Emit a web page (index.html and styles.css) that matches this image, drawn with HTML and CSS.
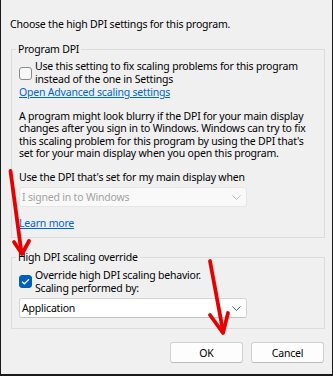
FILE: index.html
```html
<!DOCTYPE html>
<html>
<head>
<meta charset="utf-8">
<link rel="stylesheet" href="styles.css">
</head>
<body>
<div class="window">
  <p class="intro">Choose the high DPI settings for this program.</p>
  <fieldset class="group g1">
    <legend>Program DPI</legend>
    <div class="check-row">
      <span class="box"></span>
      <span class="label">Use this setting to fix scaling problems for this program<br>instead of the one in Settings</span>
    </div>
    <a class="link">Open Advanced scaling settings</a>
    <p class="para">A program might look blurry if the DPI for your main display<br>changes after you sign in to Windows. Windows can try to fix<br>this scaling problem for this program by using the DPI that's<br>set for your main display when you open this program.</p>
    <p class="label2">Use the DPI that's set for my main display when</p>
    <div class="select disabled">
      <span>I signed in to Windows</span>
      <svg class="chev" width="9" height="5" viewBox="0 0 9 5"><path d="M0.5 0.5 L4.5 4.5 L8.5 0.5" fill="none" stroke="#b8b8b8" stroke-width="1"/></svg>
    </div>
    <a class="link learn">Learn more</a>
  </fieldset>
  <fieldset class="group g2">
    <legend>High DPI scaling override</legend>
    <div class="check-row">
      <span class="box checked"><svg width="9" height="7" viewBox="0 0 9 7"><path d="M1 3.6 L3.3 5.8 L8 1.2" fill="none" stroke="#fff" stroke-width="1.2"/></svg></span>
      <span class="label">Override high DPI scaling behavior.<br>Scaling performed by:</span>
    </div>
    <div class="select">
      <span>Application</span>
      <svg class="chev" width="9" height="5" viewBox="0 0 9 5"><path d="M0.5 0.5 L4.5 4.5 L8.5 0.5" fill="none" stroke="#606060" stroke-width="1"/></svg>
    </div>
  </fieldset>
  <div class="buttons">
    <button class="btn">OK</button>
    <button class="btn">Cancel</button>
  </div>
  <svg class="arrows" width="333" height="376" viewBox="0 0 333 376">
    <g fill="none" stroke="#e60000" stroke-width="3.8" stroke-linecap="round" stroke-linejoin="round">
      <path d="M10.5 171 L21.5 253"/>
      <path d="M14 242 L22 254 L29 241"/>
      <path d="M210 261 L223 331"/>
      <path d="M210 315 L223 333 L228 313"/>
    </g>
  </svg>
</div>
</body>
</html>
```

FILE: styles.css
```css
html, body {
  margin: 0;
  padding: 0;
  background: #f0f0f0;
}

.window {
  position: relative;
  width: 333px;
  height: 376px;
  box-sizing: border-box;
  background: #f0f0f0;
  border-left: 1px solid #1a1a1a;
  border-right: 1px solid #1a1a1a;
  border-bottom: 2px solid #1a1a1a;
  font-family: "Noto Sans", "DejaVu Sans", sans-serif;
  font-size: 10.5px;
  letter-spacing: -0.2px;
  line-height: 13px;
  color: #000;
  white-space: nowrap;
  overflow: hidden;
}

.intro {
  margin: 18px 0 0 9px;
}

.group {
  margin: 0 7px 0 10px;
  padding: 0 7px 7px 7px;
  border: 1px solid #dcdcdc;
  min-width: 0;
}

.group legend {
  padding: 0 2px;
  margin-left: -3px;
  line-height: 13px;
}

.g1 {
  margin-top: 12px;
}

.g2 {
  margin-top: 13px;
  padding-bottom: 10px;
}

.check-row {
  display: flex;
  align-items: center;
  gap: 3px;
  padding-top: 4px;
}

.g2 .check-row {
  padding-top: 5px;
}

.box {
  width: 13px;
  height: 13px;
  box-sizing: border-box;
  border: 1px solid #8a8a8a;
  border-radius: 3px;
  background: #f7f7f7;
  flex: none;
  display: flex;
  align-items: center;
  justify-content: center;
}

.box.checked {
  background: #005fb8;
  border-color: #005fb8;
}

.link {
  display: block;
  color: #0066cc;
  text-decoration: underline;
}

.para {
  margin: 10.5px 0 0 0;
  line-height: 12.5px;
}

.label2 {
  margin: 11px 0 0 0;
}

.select {
  margin-top: 3.5px;
  width: 228px;
  height: 20px;
  box-sizing: border-box;
  border: 1px solid #d6d6d6;
  border-bottom-color: #c4c4c4;
  border-radius: 3px;
  background: #fff;
  display: flex;
  align-items: center;
  justify-content: space-between;
  padding: 0 5px 0 2px;
}

.select.disabled {
  background: #f9f9f9;
  border-color: #e6e6e6;
  color: #a3a3a3;
}

.learn {
  margin-top: 9.5px;
}

.buttons {
  display: flex;
  justify-content: flex-end;
  gap: 8px;
  margin-top: 13px;
  padding-right: 8px;
}

.btn {
  width: 73px;
  height: 21px;
  box-sizing: border-box;
  border: 1px solid #d0d0d0;
  border-bottom-color: #bdbdbd;
  border-radius: 3px;
  background: #fdfdfd;
  font-family: inherit;
  font-size: 10.5px;
  letter-spacing: -0.2px;
  color: #000;
  padding: 0;
}

.arrows {
  position: absolute;
  left: -1px;
  top: 0;
  pointer-events: none;
}
```
